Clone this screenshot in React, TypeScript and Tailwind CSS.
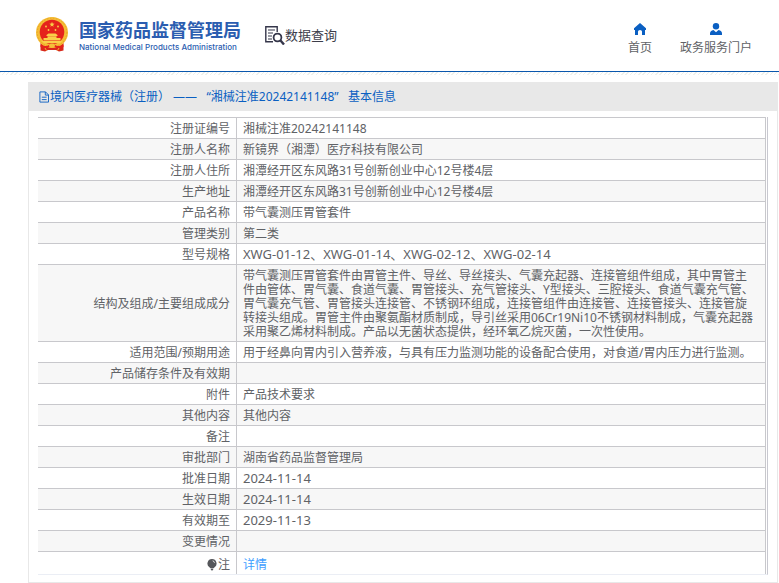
import React from "react";

type Row = { label: string; value: string; latin?: boolean };

const rows: Row[] = [
  { label: "注册证编号", value: "湘械注准20242141148" },
  { label: "注册人名称", value: "新镜界（湘潭）医疗科技有限公司" },
  { label: "注册人住所", value: "湘潭经开区东风路31号创新创业中心12号楼4层" },
  { label: "生产地址", value: "湘潭经开区东风路31号创新创业中心12号楼4层" },
  { label: "产品名称", value: "带气囊测压胃管套件" },
  { label: "管理类别", value: "第二类" },
  { label: "型号规格", value: "XWG-01-12、XWG-01-14、XWG-02-12、XWG-02-14", latin: true },
  {
    label: "结构及组成/主要组成成分",
    value:
      "带气囊测压胃管套件由胃管主件、导丝、导丝接头、气囊充起器、连接管组件组成，其中胃管主件由管体、胃气囊、食道气囊、胃管接头、充气管接头、Y型接头、三腔接头、食道气囊充气管、胃气囊充气管、胃管接头连接管、不锈钢环组成，连接管组件由连接管、连接管接头、连接管旋转接头组成。胃管主件由聚氨酯材质制成，导引丝采用06Cr19Ni10不锈钢材料制成，气囊充起器采用聚乙烯材料制成。产品以无菌状态提供，经环氧乙烷灭菌，一次性使用。",
  },
  {
    label: "适用范围/预期用途",
    value: "用于经鼻向胃内引入营养液，与具有压力监测功能的设备配合使用，对食道/胃内压力进行监测。",
  },
  { label: "产品储存条件及有效期", value: "" },
  { label: "附件", value: "产品技术要求" },
  { label: "其他内容", value: "其他内容" },
  { label: "备注", value: "" },
  { label: "审批部门", value: "湖南省药品监督管理局" },
  { label: "批准日期", value: "2024-11-14", latin: true },
  { label: "生效日期", value: "2024-11-14", latin: true },
  { label: "有效期至", value: "2029-11-13", latin: true },
  { label: "变更情况", value: "" },
];

function Emblem() {
  return (
    <svg className="h-[35px] w-8" viewBox="0 0 32 35" aria-hidden="true">
      <path d="M4.500 24L4.500 33.500 9 34.500 12 33h8l3 1.500 4.500-1V24z" fill="#d8281c" />
      <ellipse cx="16" cy="15.500" rx="16" ry="15.500" fill="#f5bd35" />
      <ellipse cx="16" cy="15.500" rx="14.800" ry="14.300" fill="none" stroke="#e29c22" strokeWidth=".8" strokeDasharray="1.500 1.500" />
      <circle cx="16" cy="15" r="12.300" fill="#e5231b" />
      <path d="M16 4.800l.7 1.800 1.900.1-1.500 1.200.5 1.900-1.600-1.100-1.600 1.100.5-1.900-1.500-1.200 1.900-.1z" fill="#f9d048" />
      <g fill="#f9d048">
        <circle cx="10" cy="9.500" r=".9" />
        <circle cx="12.500" cy="13" r=".9" />
        <circle cx="19.500" cy="13" r=".9" />
        <circle cx="22" cy="9.500" r=".9" />
        <path d="M10.500 18l2-1.500h7l2 1.500v1h-11z" />
        <path d="M11.500 19.300h9v1.700h4v2.600h-17V21h4z" />
        <path d="M5.500 24h21l-2.500 2.200H8z" />
      </g>
      <path d="M4.500 27.500q5.500 3 9 0h5q3.500 3 9 0V30q-5 2.500-9 0h-5q-4 2.500-9 0z" fill="#e5231b" />
      <ellipse cx="16" cy="28.500" rx="3" ry="2" fill="#f5c03a" />
      <path d="M9 31l1.500 2.500M23 31l-1.500 2.500" stroke="#f3b52f" strokeWidth="1" />
    </svg>
  );
}

function QueryIcon() {
  return (
    <svg className="h-5 w-5" viewBox="0 0 20 20" fill="none" stroke="#35364a" aria-hidden="true">
      <path d="M8 16.800H.8V1.800h11.400V7" strokeWidth="1.400" />
      <path d="M3 5h7M3 8h5M3 11h4M3 14h4" strokeWidth="1.100" />
      <circle cx="12.500" cy="12.500" r="3.900" strokeWidth="1.800" />
      <path d="M15.500 15.500l3.500 4" strokeWidth="2.400" />
    </svg>
  );
}

function HomeIcon() {
  return (
    <svg className="h-3 w-3" viewBox="0 0 12 12" fill="#0a5fc2" aria-hidden="true">
      <path d="M6 0l6 5.300V7h-1v5H8V8.500Q8 7 6 7T4 8.500V12H1V7H0V5.300z" />
    </svg>
  );
}

function UserIcon() {
  return (
    <svg className="h-3 w-3" viewBox="0 0 12 12" fill="#0a5fc2" aria-hidden="true">
      <circle cx="6" cy="3.200" r="3.200" />
      <path d="M0 12V10.500Q0 7.500 3.500 7L6 9.200 8.500 7Q12 7.500 12 10.500V12z" />
    </svg>
  );
}

function DocIcon() {
  return (
    <svg className="h-3 w-[11px]" viewBox="0 0 11 12" fill="none" stroke="#0a5fc2" aria-hidden="true">
      <path d="M.9.9h5.600l3 3v7.200H.9zM6.300.9v3.200h3.200M2.800 6.200h4.800M2.800 8.600h4.800" strokeWidth=".9" />
    </svg>
  );
}

function BulbIcon() {
  return (
    <svg className="h-3 w-3" viewBox="0 0 12 12" aria-hidden="true">
      <path d="M6 0a4.500 4.500 0 0 1 2.600 8.200L7.500 9.300h-3L3.400 8.200A4.500 4.500 0 0 1 6 0zM4.800 9.700h2.400v1L6 11.700l-1.200-1z" fill="#55565a" />
      <path d="M6.700 1.800q1.600.4 1.800 2" stroke="#fff" strokeWidth=".8" fill="none" />
    </svg>
  );
}

export default function App() {
  return (
    <div
      lang="zh-CN"
      className="bg-white font-['Noto_Sans','Noto_Sans_CJK_SC',sans-serif] text-xs leading-[14px] text-[#606266]"
    >
      <header className="flex h-[72px] items-start justify-between border-b border-[#0a57ad] pr-[27px] pl-9">
        <div className="flex items-start">
          <a href="#home" className="flex items-start gap-[11px] pt-[17px] text-[#2b5db0]">
            <Emblem />
            <span className="flex flex-col gap-px pt-[3px]">
              <span className="text-[18px] leading-[20px] font-bold whitespace-nowrap">国家药品监督管理局</span>
              <span className="font-[Inter,'Liberation_Sans',sans-serif] text-[8px] leading-3 font-medium whitespace-nowrap">
                National Medical Products Administration
              </span>
            </span>
          </a>
          <h1 className="ml-6 flex items-center pt-[25px] text-[13px] leading-5 whitespace-nowrap text-[#3c3d4a]">
            <QueryIcon />
            数据查询
          </h1>
        </div>
        <nav className="flex gap-7 pt-[23px]">
          <a href="#index" className="flex flex-col items-center gap-[6px]">
            <HomeIcon />
            首页
          </a>
          <a href="#portal" className="flex flex-col items-center gap-[6px]">
            <UserIcon />
            政务服务门户
          </a>
        </nav>
      </header>
      <div className="h-[3px] bg-[repeating-linear-gradient(135deg,#eef1ec_0px,#eef1ec_1px,#ffffff_1px,#ffffff_3px)]" />

      <main className="mt-[7px] mr-px ml-7 border border-[#e8e8e8]">
        <h2 className="flex h-7 items-center bg-[#e8e8e8] pl-[10px] text-[#0a5fc2]">
          <DocIcon />
          <span>境内医疗器械（注册） —— &nbsp; “湘械注准20242141148”&nbsp; &nbsp;基本信息</span>
        </h2>
        <div className="px-[9px] pt-[6px] pb-[7px]">
          <div className="border-r border-b border-r-[#c8c8d0] border-b-[#ebeef5] pr-px">
            <table className="w-full table-fixed border-separate border-spacing-0 border-t border-r border-[#c8c8cc]">
              <colgroup>
                <col className="w-[199px]" />
                <col />
              </colgroup>
              <tbody>
                {rows.map((row) => (
                  <tr key={row.label} className="even:bg-[#f7f7f7]">
                    <th
                      scope="row"
                      className="h-[21px] border-r border-b border-[#c8c8cc] px-[6px] pt-1 pb-[2px] text-right font-normal"
                    >
                      {row.label}
                    </th>
                    <td
                      className={`border-b border-[#c8c8cc] pr-2 pl-[6px] ${row.latin ? "py-[3px] text-[13px] leading-[14px]" : "pt-1 pb-[2px]"}`}
                    >
                      {row.value}
                    </td>
                  </tr>
                ))}
                <tr>
                  <th scope="row" className="h-[22px] border-r border-[#c8c8cc] px-[6px] pt-[6px] pb-[2px] text-right font-normal">
                    <span className="flex items-center justify-end">
                      <BulbIcon />注
                    </span>
                  </th>
                  <td className="px-[6px] pt-[6px] pb-[2px]">
                    <a href="#detail" className="text-[#409eff]">
                      详情
                    </a>
                  </td>
                </tr>
              </tbody>
            </table>
          </div>
        </div>
      </main>
    </div>
  );
}
